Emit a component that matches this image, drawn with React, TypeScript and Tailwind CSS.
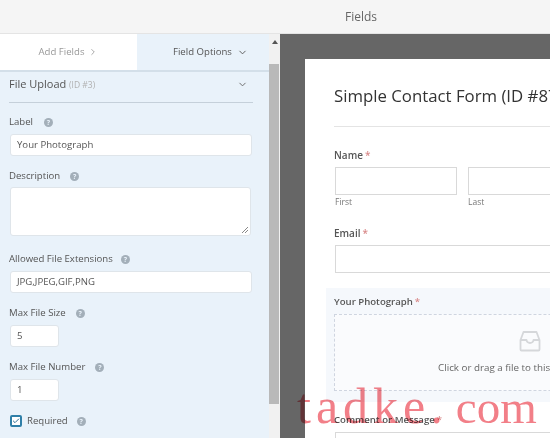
import { ChevronDown, ChevronRight, Check } from "lucide-react"

const Help = ({ className = "" }: { className?: string }) => (
  <span className={`inline-flex h-[9px] w-[9px] items-center justify-center rounded-full bg-[#a3afb9] text-[7px] font-bold leading-none text-[#e9f2fa] ${className}`}>?</span>
)

const OptionLabel = ({ text, gap }: { text: string; gap: string }) => (
  <div className="flex h-[14px] items-center text-[9.6px] text-[#555]">
    <span>{text}</span>
    <Help className={gap} />
  </div>
)

const OptionInput = ({ value, width }: { value: string; width: string }) => (
  <div className={`flex h-[22px] ${width} items-center rounded-[3px] border border-[#dfe5ea] bg-white pl-[6px] text-[9.6px] text-[#555]`}>{value}</div>
)

const Req = () => <span className="ml-[2px] text-[#d98a8a]">*</span>

const Sidebar = () => (
  <div className="flex h-full w-[280px] shrink-0">
    <div className="flex w-[269px] flex-col bg-[#e9f2fa]">
      <div className="flex h-[38px] shrink-0 border-b-2 border-[#d3dfe9] text-[9.6px]">
        <div className="flex w-[137px] items-center justify-center gap-[4px] bg-white text-[#999]">
          Add Fields <ChevronRight size={10} strokeWidth={2} />
        </div>
        <div className="flex flex-1 items-center gap-[5px] pl-[36px] text-[#555]">
          Field Options <ChevronDown size={11} strokeWidth={2} />
        </div>
      </div>
      <div className="flex flex-col pl-[9px] pr-[16px]">
        <div className="flex h-[31px] items-center justify-between border-b border-[#c5d0da] pb-[9px] pt-[4px]">
          <div className="text-[11px] text-[#555]">
            File Upload <span className="text-[8.5px] text-[#b0b0b0]">(ID #3)</span>
          </div>
          <ChevronDown size={11} strokeWidth={2} className="mr-[5px] text-[#666]" />
        </div>
        <div className="mt-[12px]"><OptionLabel text="Label" gap="ml-[11px]" /></div>
        <div className="mt-[5px] pl-px"><OptionInput value="Your Photograph" width="w-[242px]" /></div>
        <div className="mt-[13px]"><OptionLabel text="Description" gap="ml-[10px]" /></div>
        <div className="relative mt-[4px] h-[49px] w-[241px] ml-px rounded-[3px] border border-[#dfe5ea] bg-white">
          <svg className="absolute bottom-[1px] right-[1px]" width="8" height="8" viewBox="0 0 8 8">
            <path d="M1 7 7 1M4 7 7 4" stroke="#888" strokeWidth="1" />
          </svg>
        </div>
        <div className="mt-[16px]"><OptionLabel text="Allowed File Extensions" gap="ml-[8px]" /></div>
        <div className="mt-[5px] pl-px"><OptionInput value="JPG,JPEG,GIF,PNG" width="w-[242px]" /></div>
        <div className="mt-[13px]"><OptionLabel text="Max File Size" gap="ml-[10px]" /></div>
        <div className="mt-[5px] pl-px"><OptionInput value="5" width="w-[49px]" /></div>
        <div className="mt-[13px]"><OptionLabel text="Max File Number" gap="ml-[10px]" /></div>
        <div className="mt-[5px] pl-px"><OptionInput value="1" width="w-[49px]" /></div>
        <div className="mt-[13px] flex h-[14px] items-center pl-px text-[9.6px] text-[#555]">
          <span className="mr-[5px] flex h-[12px] w-[12px] items-center justify-center rounded-[2px] border-2 border-[#2f7fa8] bg-white">
            <Check size={10} strokeWidth={3} className="text-[#2f6f95]" />
          </span>
          Required
          <Help className="ml-[9px]" />
        </div>
      </div>
    </div>
    <div className="flex w-[11px] flex-col bg-[#f1f1f1]">
      <div className="flex h-[30px] shrink-0 justify-center pt-[6px]">
        <span className="h-0 w-0 border-x-[3px] border-b-[4px] border-x-transparent border-b-[#555]" />
      </div>
      <div className="h-[340px] w-[10px] bg-[#b9b9b9]" />
    </div>
  </div>
)

const InboxIcon = () => (
  <svg width="22" height="22" viewBox="0 0 22 22" fill="none" stroke="#d5d7da" strokeWidth="1.8" strokeLinejoin="round">
    <path d="M1.5 10 4.5 2h13l3 8v9.5a1 1 0 0 1-1 1h-17a1 1 0 0 1-1-1Z" />
    <path d="M1.5 10h6a3.5 3 0 0 0 7 0h6" />
  </svg>
)

const Preview = () => (
  <div className="flex-1 overflow-hidden bg-[#666] pl-[25px] pt-[25px]">
    <div className="h-[400px] w-[420px] bg-white pl-[29px]">
      <div className="border-b border-[#e4e4e4] pb-[18px] pt-[25px] text-[16.8px] font-medium leading-[24px] text-[#333] whitespace-nowrap">
        Simple Contact Form (ID #87)
      </div>
      <div className="mt-[20px] text-[10px] font-semibold leading-[16px] text-[#555]">Name<Req /></div>
      <div className="mt-[4px] flex gap-[11px] pl-px">
        <div>
          <div className="h-[28px] w-[122px] border border-[#d9d9d9]" />
          <div className="mt-[1px] text-[8.5px] leading-[12px] text-[#777]">First</div>
        </div>
        <div>
          <div className="h-[28px] w-[122px] border border-[#d9d9d9]" />
          <div className="mt-[1px] text-[8.5px] leading-[12px] text-[#777]">Last</div>
        </div>
      </div>
      <div className="mt-[17px] text-[10px] font-semibold leading-[16px] text-[#555]">Email<Req /></div>
      <div className="mt-[4px] ml-px h-[28px] w-[400px] border border-[#d9d9d9]" />
      <div className="ml-[-8px] mt-[15px] h-[114px] w-[420px] bg-[#f5f8fc] pl-[8px] pt-[6px]">
        <div className="text-[9.6px] font-semibold leading-[16px] text-[#555]">Your Photograph<Req /></div>
        <div className="mt-[4px] flex h-[77px] w-[392px] flex-col items-center border border-dashed border-[#cfd5e0] bg-[#fafbfd] pt-[15px]">
          <InboxIcon />
          <div className="mt-[9px] whitespace-nowrap text-[9.8px] leading-[14px] text-[#666]">Click or drag a file to this area to upload.</div>
        </div>
      </div>
      <div className="mt-[10px] text-[9.6px] font-semibold leading-[16px] text-[#555]">Comment or Message<Req /></div>
      <div className="mt-[4px] ml-px h-[60px] w-[400px] border border-[#d9d9d9]" />
    </div>
  </div>
)

export default function App() {
  return (
    <div className="relative flex h-[438px] w-[550px] flex-col overflow-hidden bg-white font-['Open_Sans',sans-serif]">
      <div className="flex h-[34px] shrink-0 items-center border-b border-[#e4e4e4] bg-[#f5f5f5] pl-[345px] text-[12px] text-[#666]">Fields</div>
      <div className="flex min-h-0 flex-1">
        <Sidebar />
        <Preview />
      </div>
      <div className="absolute left-[297px] top-[378px] flex items-baseline whitespace-nowrap font-['Liberation_Serif',serif] leading-[56px] text-[#f27f88] mix-blend-multiply">
        <span className="text-[50px] tracking-[5px]">tadke.</span>
        <span className="ml-[8px] text-[47px]">com</span>
      </div>
    </div>
  )
}
